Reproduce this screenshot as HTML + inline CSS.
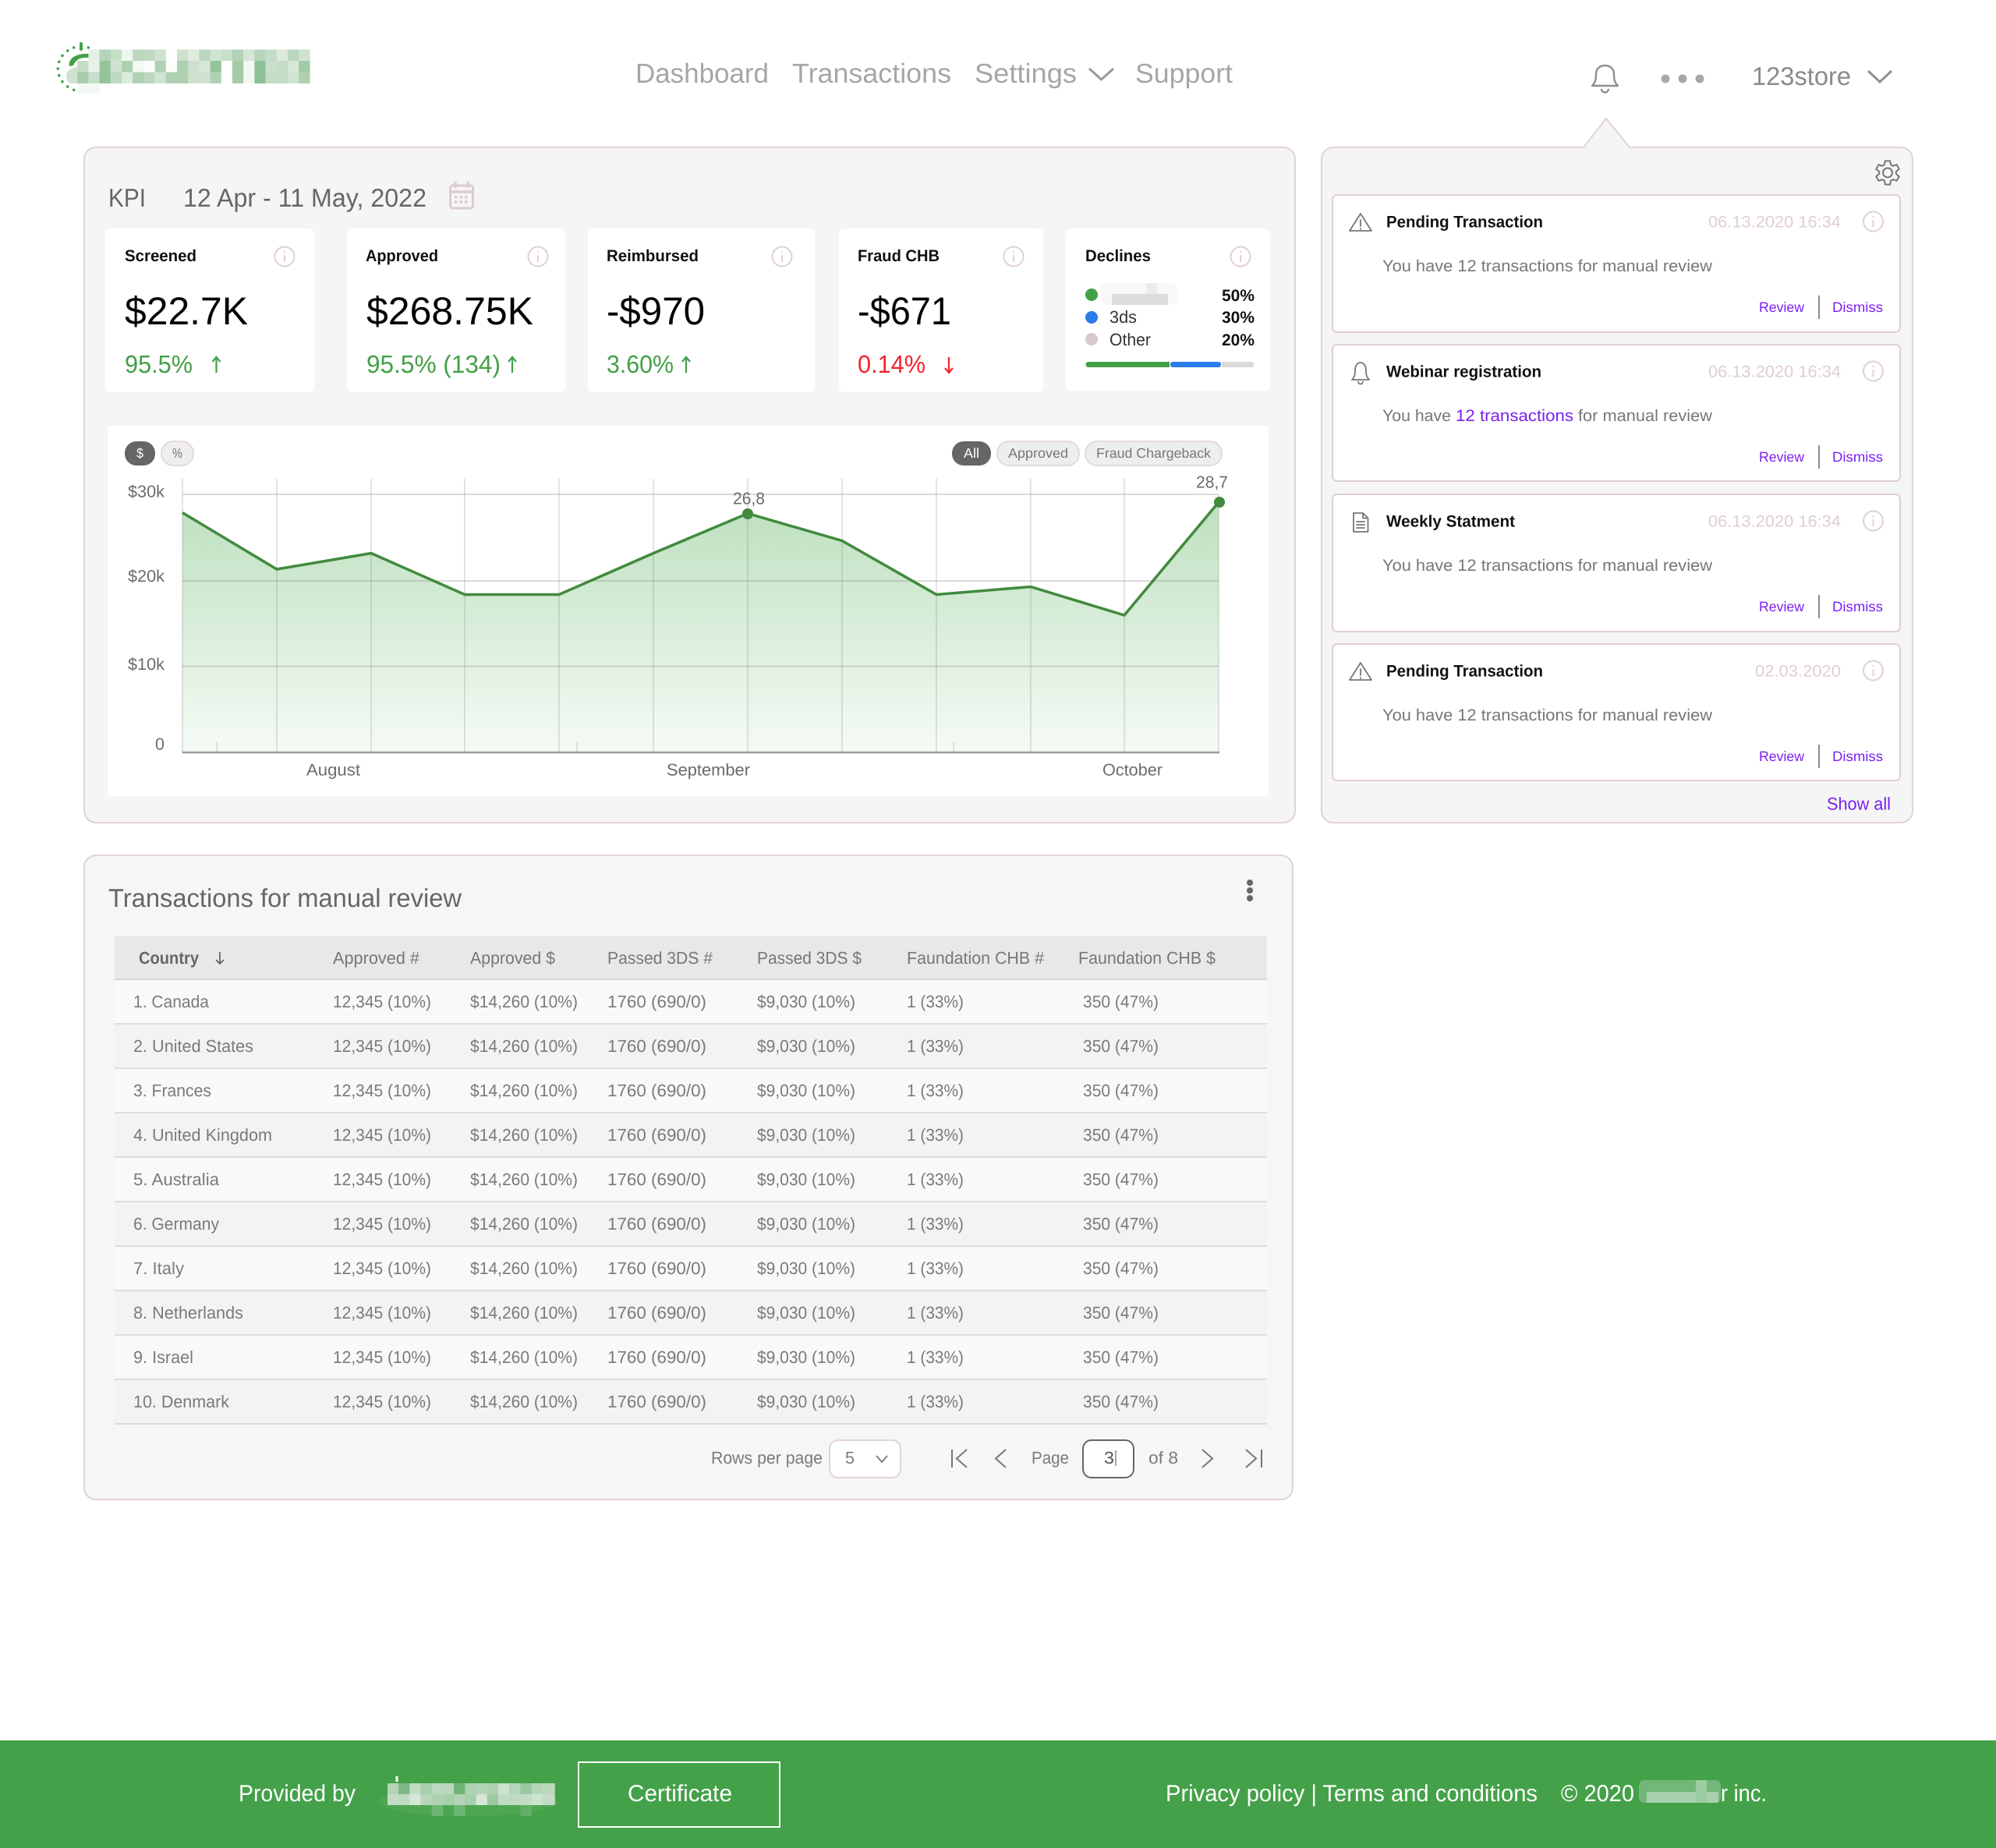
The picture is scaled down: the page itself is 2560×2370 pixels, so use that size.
<!DOCTYPE html>
<html lang="en"><head><meta charset="utf-8"><title>Dashboard</title>
<style>
html,body{margin:0;padding:0;background:#fff}
svg{display:block}
text{font-family:"Liberation Sans",sans-serif;text-rendering:geometricPrecision}
.nav{font-size:35px;fill:#a6a6a6}
.lb{font-size:21px;font-weight:700;fill:#111}
.val{font-size:50px;fill:#000}
.sub{font-size:32px;fill:#43a047}
.red{fill:#f5222d}
.h{font-size:33px;fill:#666}
.ax{font-size:21.5px;fill:#6b6b6b}
.pl{font-size:17.5px;fill:#777}
.d{font-size:21px;fill:#dfced1}
.b{font-size:21px;fill:#777}
.pu{fill:#7a1ff0}
.a{font-size:18px;fill:#7a1ff0}
.c{font-size:22px;fill:#7a7a7a}
.th{font-size:22px;fill:#777}
.f{font-size:30px;fill:#fff}
.ic{fill:none;stroke:#e0d0d3;stroke-width:2}
.g{fill:none;stroke:#777;stroke-width:1.8;stroke-linejoin:round;stroke-linecap:round}
</style></head>
<body>
<svg width="2560" height="2370" viewBox="0 0 2560 2370" xmlns="http://www.w3.org/2000/svg">
<defs>
<linearGradient id="ag" x1="0" y1="644" x2="0" y2="965" gradientUnits="userSpaceOnUse"><stop offset="0" stop-color="#bde0be"/><stop offset="1" stop-color="#f5fbf6"/></linearGradient>
<g id="inf"><circle cx="0" cy="0" r="12.5" class="ic"/><path d="M0 -2V7M0 -7V-5" class="ic" stroke-width="1.6"/></g>
</defs>
<rect width="2560" height="2370" fill="#fff"/>

<!-- logo -->
<g fill="#43a047">
<rect x="102" y="54" width="4" height="11" rx="2"/>
<circle cx="94.7" cy="61" r="1.8"/><circle cx="86.7" cy="65" r="1.8"/><circle cx="80" cy="71.3" r="1.8"/><circle cx="75.7" cy="79.3" r="1.8"/><circle cx="74.3" cy="88" r="1.8"/><circle cx="75.7" cy="96.7" r="1.8"/><circle cx="80" cy="104.7" r="1.8"/><circle cx="86.7" cy="111" r="1.8"/><circle cx="94.7" cy="115.3" r="1.8"/><circle cx="113.3" cy="61" r="1.8"/><circle cx="121.3" cy="65" r="1.8"/>
<path d="M89 85C87 75 97 68 116 69L114 74C104 73 97 76 94 84Z"/>
</g>
<g>
<rect x="99.2" y="78" width="14.4" height="14.5" fill="#c5dcc6"/><rect x="113.4" y="63.5" width="14.4" height="14.5" fill="#e4efe5"/><rect x="113.4" y="78" width="14.4" height="14.5" fill="#e8f2e8"/>
<path d="M99.2 86C91 87 85 91 85 97C85 102 87 107 91 107H99.6V86Z" fill="#cfe3d0"/>
<rect x="99.2" y="92.5" width="14.4" height="14.5" fill="#a8cdac"/><rect x="113.4" y="92.5" width="14.4" height="14.5" fill="#c9dfca"/>
<rect x="127.6" y="63.5" width="14.4" height="14.5" fill="#b5d3b8"/><rect x="141.8" y="63.5" width="14.4" height="14.5" fill="#c5dfc7"/><rect x="156" y="63.5" width="14.4" height="14.5" fill="#eff6ef"/><rect x="170.2" y="63.5" width="14.4" height="14.5" fill="#bcd8bf"/><rect x="184.4" y="63.5" width="14.4" height="14.5" fill="#c0dac2"/><rect x="198.6" y="63.5" width="14.4" height="14.5" fill="#cfe3d0"/><rect x="212.8" y="63.5" width="14.4" height="14.5" fill="#fcfefc"/><rect x="227" y="63.5" width="14.4" height="14.5" fill="#cde1ce"/><rect x="241.2" y="63.5" width="14.4" height="14.5" fill="#dfece0"/><rect x="255.4" y="63.5" width="14.4" height="14.5" fill="#bcd7bf"/><rect x="269.6" y="63.5" width="14.4" height="14.5" fill="#d0e4d1"/><rect x="283.8" y="63.5" width="14.4" height="14.5" fill="#c9dfcb"/><rect x="298" y="63.5" width="14.4" height="14.5" fill="#b3d2b6"/><rect x="312.2" y="63.5" width="14.4" height="14.5" fill="#d5e6d6"/><rect x="326.4" y="63.5" width="14.4" height="14.5" fill="#b7d5ba"/><rect x="340.6" y="63.5" width="14.4" height="14.5" fill="#c3dcc5"/><rect x="354.8" y="63.5" width="14.4" height="14.5" fill="#dcebdd"/><rect x="369" y="63.5" width="14.4" height="14.5" fill="#bad7bd"/><rect x="383.2" y="63.5" width="14.4" height="14.5" fill="#cfe3d0"/>
<rect x="127.6" y="78" width="14.4" height="14.5" fill="#94c49a"/><rect x="141.8" y="78" width="14.4" height="14.5" fill="#cfe3d0"/><rect x="156" y="78" width="14.4" height="14.5" fill="#aed0b1"/><rect x="170.2" y="78" width="14.4" height="14.5" fill="#f2f8f2"/><rect x="184.4" y="78" width="14.4" height="14.5" fill="#fbfdfb"/><rect x="198.6" y="78" width="14.4" height="14.5" fill="#b1d1b5"/><rect x="212.8" y="78" width="14.4" height="14.5" fill="#fafdfa"/><rect x="227" y="78" width="14.4" height="14.5" fill="#acd0b0"/><rect x="241.2" y="78" width="14.4" height="14.5" fill="#cde1ce"/><rect x="255.4" y="78" width="14.4" height="14.5" fill="#d6e7d7"/><rect x="269.6" y="78" width="14.4" height="14.5" fill="#95c49b"/><rect x="283.8" y="78" width="14.4" height="14.5" fill="#fff"/><rect x="298" y="78" width="14.4" height="14.5" fill="#a6cba9"/><rect x="312.2" y="78" width="14.4" height="14.5" fill="#f3f8f3"/><rect x="326.4" y="78" width="14.4" height="14.5" fill="#8fc096"/><rect x="340.6" y="78" width="14.4" height="14.5" fill="#c9dfcb"/><rect x="354.8" y="78" width="14.4" height="14.5" fill="#c4dcc6"/><rect x="369" y="78" width="14.4" height="14.5" fill="#d7e8d8"/><rect x="383.2" y="78" width="14.4" height="14.5" fill="#a3caa7"/>
<rect x="127.6" y="92.5" width="14.4" height="14.5" fill="#92c399"/><rect x="141.8" y="92.5" width="14.4" height="14.5" fill="#bfd9c1"/><rect x="156" y="92.5" width="14.4" height="14.5" fill="#dcebdc"/><rect x="170.2" y="92.5" width="14.4" height="14.5" fill="#afd1b2"/><rect x="184.4" y="92.5" width="14.4" height="14.5" fill="#bdd8bf"/><rect x="198.6" y="92.5" width="14.4" height="14.5" fill="#d0e4d1"/><rect x="212.8" y="92.5" width="14.4" height="14.5" fill="#aed0b1"/><rect x="227" y="92.5" width="14.4" height="14.5" fill="#aed0b1"/><rect x="241.2" y="92.5" width="14.4" height="14.5" fill="#cde1ce"/><rect x="255.4" y="92.5" width="14.4" height="14.5" fill="#cfe3d0"/><rect x="269.6" y="92.5" width="14.4" height="14.5" fill="#b0d1b3"/><rect x="283.8" y="92.5" width="14.4" height="14.5" fill="#fff"/><rect x="298" y="92.5" width="14.4" height="14.5" fill="#a6cba9"/><rect x="312.2" y="92.5" width="14.4" height="14.5" fill="#f3f8f3"/><rect x="326.4" y="92.5" width="14.4" height="14.5" fill="#8fc096"/><rect x="340.6" y="92.5" width="14.4" height="14.5" fill="#c3dcc5"/><rect x="354.8" y="92.5" width="14.4" height="14.5" fill="#c3dcc5"/><rect x="369" y="92.5" width="14.4" height="14.5" fill="#d0e4d1"/><rect x="383.2" y="92.5" width="14.4" height="14.5" fill="#afd1b2"/>
<rect x="99" y="107" width="29" height="13" fill="#f5f9f5"/>
</g>

<!-- nav -->
<text class="nav" x="815" y="106" textLength="171" lengthAdjust="spacingAndGlyphs">Dashboard</text>
<text class="nav" x="1016" y="106" textLength="204" lengthAdjust="spacingAndGlyphs">Transactions</text>
<text class="nav" x="1250" y="106" textLength="131" lengthAdjust="spacingAndGlyphs">Settings</text>
<path d="M1397 88L1412.500 102L1428 88" fill="none" stroke="#999" stroke-width="3"/>
<text class="nav" x="1456" y="106" textLength="125" lengthAdjust="spacingAndGlyphs">Support</text>
<path d="M2042 110C2046 106 2047 102 2047 95C2047 88 2052 84 2058.5 84C2065 84 2070 88 2070 95C2070 102 2071 106 2075 110Z M2054 114a4.5 4.5 0 0 0 9 0" fill="none" stroke="#8f8f8f" stroke-width="2.4" stroke-linejoin="round"/>
<g fill="#a8a8a8"><circle cx="2136" cy="101" r="5.500"/><circle cx="2158" cy="101" r="5.500"/><circle cx="2180" cy="101" r="5.500"/></g>
<text class="nav" x="2247" y="109" textLength="127" lengthAdjust="spacingAndGlyphs" style="font-size:33px;fill:#8a8a8a">123store</text>
<path d="M2396 91L2411 105L2426 91" fill="none" stroke="#8f8f8f" stroke-width="3"/>

<!-- panels -->
<rect x="108" y="189" width="1553" height="866" rx="15" fill="#f5f5f5" stroke="#e2d3d5" stroke-width="2"/>
<path d="M1710 189H2031L2060 152L2090 189H2438a15 15 0 0 1 15 15V1040a15 15 0 0 1-15 15H1710a15 15 0 0 1-15-15V204a15 15 0 0 1 15-15Z" fill="#f5f5f5" stroke="#e2d3d5" stroke-width="2"/>

<!-- KPI head -->
<text class="h" x="139" y="265" textLength="48" lengthAdjust="spacingAndGlyphs">KPI</text>
<text class="h" x="235" y="265" textLength="312" lengthAdjust="spacingAndGlyphs">12 Apr - 11 May, 2022</text>
<g fill="none" stroke="#dccccf" stroke-width="3"><rect x="577.5" y="238" width="29" height="29" rx="3"/><path d="M584 233V241M600 233V241M578 246H606" stroke-width="3.500"/><path d="M583 253H601M583 259H601" stroke-width="3.500" stroke-dasharray="3.500 3"/></g>

<!-- KPI cards -->
<g fill="#fff">
<rect x="135" y="293" width="268" height="210" rx="7"/><rect x="445" y="293" width="280" height="210" rx="7"/><rect x="754" y="293" width="291" height="210" rx="7"/><rect x="1076" y="293" width="262" height="210" rx="7"/><rect x="1367" y="293" width="262" height="208" rx="7"/>
</g>
<text class="lb" x="160" y="335" textLength="92" lengthAdjust="spacingAndGlyphs">Screened</text>
<text class="lb" x="469" y="335" textLength="93" lengthAdjust="spacingAndGlyphs">Approved</text>
<text class="lb" x="778" y="335" textLength="118" lengthAdjust="spacingAndGlyphs">Reimbursed</text>
<text class="lb" x="1100" y="335" textLength="105" lengthAdjust="spacingAndGlyphs">Fraud CHB</text>
<text class="lb" x="1392" y="335" textLength="84" lengthAdjust="spacingAndGlyphs">Declines</text>
<use href="#inf" x="365" y="329"/><use href="#inf" x="690" y="329"/><use href="#inf" x="1003" y="329"/><use href="#inf" x="1300" y="329"/><use href="#inf" x="1591" y="329"/>
<text class="val" x="160" y="416" textLength="158" lengthAdjust="spacingAndGlyphs">$22.7K</text>
<text class="val" x="470" y="416" textLength="214" lengthAdjust="spacingAndGlyphs">$268.75K</text>
<text class="val" x="778" y="416" textLength="126" lengthAdjust="spacingAndGlyphs">-$970</text>
<text class="val" x="1100" y="416" textLength="120" lengthAdjust="spacingAndGlyphs">-$671</text>
<text class="sub" x="160" y="478" textLength="87" lengthAdjust="spacingAndGlyphs">95.5%</text>
<text class="sub" x="470" y="478" textLength="172" lengthAdjust="spacingAndGlyphs">95.5% (134)</text>
<text class="sub" x="778" y="478" textLength="86" lengthAdjust="spacingAndGlyphs">3.60%</text>
<text class="sub red" x="1100" y="478" textLength="87" lengthAdjust="spacingAndGlyphs">0.14%</text>
<g fill="none" stroke="#43a047" stroke-width="2.2"><path d="M277.5 478V458M272.5 464L277.5 458L282.5 464"/><path d="M657 478V458M652 464L657 458L662 464"/><path d="M880 478V458M875 464L880 458L885 464"/></g>
<path d="M1217 458V478M1212 472L1217 478L1222 472" fill="none" stroke="#f5222d" stroke-width="2.2"/>
<circle cx="1400" cy="378" r="8" fill="#43a047"/><circle cx="1400" cy="407" r="8" fill="#2b7de9"/><circle cx="1400" cy="435" r="8" fill="#d9c8cb"/>
<g>
<rect x="1412" y="363" width="98" height="28" rx="8" fill="#f8f8f8"/><rect x="1426" y="377" width="72" height="14" fill="#dcdcdc"/><rect x="1470" y="363" width="14" height="14" fill="#ececec"/>
</g>
<text class="c" x="1423" y="414" textLength="35" lengthAdjust="spacingAndGlyphs" style="fill:#333">3ds</text>
<text class="c" x="1423" y="443" textLength="53" lengthAdjust="spacingAndGlyphs" style="fill:#333">Other</text>
<g class="lb"><text x="1567" y="386" textLength="42" lengthAdjust="spacingAndGlyphs">50%</text><text x="1567" y="414" textLength="42" lengthAdjust="spacingAndGlyphs">30%</text><text x="1567" y="443" textLength="42" lengthAdjust="spacingAndGlyphs">20%</text></g>
<path d="M1396 464H1500V471H1396a3.500 3.500 0 0 1 0-7Z" fill="#43a047"/><rect x="1501" y="464" width="65" height="7" rx="3" fill="#2b7de9"/><path d="M1567 464H1605a3.500 3.500 0 0 1 0 7H1567Z" fill="#d9d9d9"/>

<!-- chart -->
<rect x="138" y="546" width="1489" height="475" fill="#fff"/>
<path d="M234 657.500L355 730L476 709.500L596 762.500L717 762.500L838 709.500L959 658.500L1080 693.500L1201 762.500L1322 752.500L1442 789L1563 644V965H234Z" fill="url(#ag)"/>
<g stroke="#5f5f5f" stroke-opacity=".22" stroke-width="1.500"><path d="M234 614V965M355 614V965M476 614V965M596 614V965M717 614V965M838 614V965M959 614V965M1080 614V965M1201 614V965M1322 614V965M1442 614V965M1563 634V965M278 951V965M740 951V965M1223 951V965"/></g>
<g stroke="#7a6a6c" stroke-opacity=".25" stroke-width="2"><path d="M234 634H1563M234 745H1563M234 854.500H1563"/></g>
<path d="M234 965H1564" stroke="#9a9a9a" stroke-width="2.500"/>
<path d="M234 657.500L355 730L476 709.500L596 762.500L717 762.500L838 709.500L959 658.500L1080 693.500L1201 762.500L1322 752.500L1442 789L1563 644" fill="none" stroke="#418a3e" stroke-width="3.500"/>
<circle cx="959" cy="659" r="7" fill="#418a3e"/><circle cx="1564" cy="644" r="7" fill="#418a3e"/>
<text class="ax" x="940" y="646.500" textLength="41" lengthAdjust="spacingAndGlyphs">26,8</text>
<text class="ax" x="1534" y="625.500" textLength="41" lengthAdjust="spacingAndGlyphs">28,7</text>
<text class="ax" x="164" y="637.500" textLength="47" lengthAdjust="spacingAndGlyphs">$30k</text>
<text class="ax" x="164" y="746" textLength="47" lengthAdjust="spacingAndGlyphs">$20k</text>
<text class="ax" x="164" y="859" textLength="47" lengthAdjust="spacingAndGlyphs">$10k</text>
<text class="ax" x="199" y="961.500" textLength="12" lengthAdjust="spacingAndGlyphs">0</text>
<text class="ax" x="393" y="994.500" textLength="69" lengthAdjust="spacingAndGlyphs">August</text>
<text class="ax" x="855" y="994.500" textLength="107" lengthAdjust="spacingAndGlyphs">September</text>
<text class="ax" x="1414" y="994.500" textLength="77" lengthAdjust="spacingAndGlyphs">October</text>
<rect x="160" y="566" width="39" height="31" rx="15" fill="#666"/>
<text class="pl" x="175" y="587" textLength="9" lengthAdjust="spacingAndGlyphs" style="fill:#fff">$</text>
<rect x="207" y="566" width="41" height="31" rx="15" fill="#eee" stroke="#e0d0d2" stroke-width="1.500"/>
<text class="pl" x="221" y="587" textLength="13" lengthAdjust="spacingAndGlyphs">%</text>
<rect x="1221" y="566" width="50" height="31" rx="15" fill="#666"/>
<text class="pl" x="1236" y="587" textLength="20" lengthAdjust="spacingAndGlyphs" style="fill:#fff">All</text>
<rect x="1279" y="566" width="105" height="31" rx="15" fill="#eee" stroke="#e0d0d2" stroke-width="1.500"/>
<text class="pl" x="1293" y="587" textLength="77" lengthAdjust="spacingAndGlyphs">Approved</text>
<rect x="1392" y="566" width="175" height="31" rx="15" fill="#eee" stroke="#e0d0d2" stroke-width="1.500"/>
<text class="pl" x="1406" y="587" textLength="147" lengthAdjust="spacingAndGlyphs">Fraud Chargeback</text>

<!-- notifications -->
<g transform="translate(2421 221.500)" fill="none" stroke="#777" stroke-width="2" stroke-linejoin="round">
<path d="M-4.120 -10.200L-3.220 -15.160L3.220 -15.160L4.120 -10.200L6.770 -8.670L11.520 -10.370L14.740 -4.790L10.890 -1.530L10.890 1.530L14.740 4.790L11.520 10.370L6.770 8.670L4.120 10.200L3.220 15.160L-3.220 15.160L-4.120 10.200L-6.770 8.670L-11.520 10.370L-14.740 4.790L-10.890 1.530L-10.890 -1.530L-14.740 -4.790L-11.520 -10.370L-6.770 -8.670Z"/>
<circle cx="0" cy="0" r="6"/>
</g>

<g fill="#fff" stroke="#e0cfd2" stroke-width="2">
<rect x="1709" y="250" width="728" height="176" rx="6"/><rect x="1709" y="442" width="728" height="175" rx="6"/><rect x="1709" y="634" width="728" height="176" rx="6"/><rect x="1709" y="826" width="728" height="175" rx="6"/>
</g>

<path d="M1745 274L1759 296H1731Z M1745 282V290 M1745 293V294" class="g"/>
<text class="lb" x="1778" y="291.500" textLength="201" lengthAdjust="spacingAndGlyphs">Pending Transaction</text>
<text class="d" x="2191" y="291.500" textLength="170" lengthAdjust="spacingAndGlyphs">06.13.2020 16:34</text>
<use href="#inf" x="2402.500" y="284"/>
<text class="b" x="1773" y="348" textLength="423" lengthAdjust="spacingAndGlyphs">You have 12 transactions for manual review</text>
<text class="a" x="2256" y="400" textLength="58" lengthAdjust="spacingAndGlyphs">Review</text>
<path d="M2333 379V409" stroke="#666" stroke-width="1.500"/>
<text class="a" x="2350" y="400" textLength="65" lengthAdjust="spacingAndGlyphs">Dismiss</text>

<path d="M1734 487C1737 484 1738 481 1738 475C1738 469 1741 465 1745 465C1749 465 1752 469 1752 475C1752 481 1753 484 1756 487Z M1742 489.500a3 3 0 0 0 6 0" class="g"/>
<text class="lb" x="1778" y="483.500" textLength="199" lengthAdjust="spacingAndGlyphs">Webinar registration</text>
<text class="d" x="2191" y="483.500" textLength="170" lengthAdjust="spacingAndGlyphs">06.13.2020 16:34</text>
<use href="#inf" x="2402.500" y="476"/>
<text class="b" x="1773" y="540" textLength="88" lengthAdjust="spacingAndGlyphs">You have</text>
<text class="b pu" x="1867" y="540" textLength="151" lengthAdjust="spacingAndGlyphs">12 transactions</text>
<text class="b" x="2024" y="540" textLength="172" lengthAdjust="spacingAndGlyphs">for manual review</text>
<text class="a" x="2256" y="592" textLength="58" lengthAdjust="spacingAndGlyphs">Review</text>
<path d="M2333 571V601" stroke="#666" stroke-width="1.500"/>
<text class="a" x="2350" y="592" textLength="65" lengthAdjust="spacingAndGlyphs">Dismiss</text>

<path d="M1736 658H1748L1754.500 664.500V682H1736Z M1748 658V664.500H1754.500 M1740 669H1750 M1740 673H1750 M1740 677H1750" class="g"/>
<text class="lb" x="1778" y="675.500" textLength="165" lengthAdjust="spacingAndGlyphs">Weekly Statment</text>
<text class="d" x="2191" y="675.500" textLength="170" lengthAdjust="spacingAndGlyphs">06.13.2020 16:34</text>
<use href="#inf" x="2402.500" y="668"/>
<text class="b" x="1773" y="732" textLength="423" lengthAdjust="spacingAndGlyphs">You have 12 transactions for manual review</text>
<text class="a" x="2256" y="784" textLength="58" lengthAdjust="spacingAndGlyphs">Review</text>
<path d="M2333 763V793" stroke="#666" stroke-width="1.500"/>
<text class="a" x="2350" y="784" textLength="65" lengthAdjust="spacingAndGlyphs">Dismiss</text>

<path d="M1745 850L1759 872H1731Z M1745 858V866 M1745 869V870" class="g"/>
<text class="lb" x="1778" y="867.500" textLength="201" lengthAdjust="spacingAndGlyphs">Pending Transaction</text>
<text class="d" x="2251" y="867.500" textLength="110" lengthAdjust="spacingAndGlyphs">02.03.2020</text>
<use href="#inf" x="2402.500" y="860"/>
<text class="b" x="1773" y="924" textLength="423" lengthAdjust="spacingAndGlyphs">You have 12 transactions for manual review</text>
<text class="a" x="2256" y="976" textLength="58" lengthAdjust="spacingAndGlyphs">Review</text>
<path d="M2333 955V985" stroke="#666" stroke-width="1.500"/>
<text class="a" x="2350" y="976" textLength="65" lengthAdjust="spacingAndGlyphs">Dismiss</text>
<text class="a" x="2343" y="1038.500" textLength="82" lengthAdjust="spacingAndGlyphs" style="font-size:22.500px">Show all</text>

<!-- table panel -->
<rect x="108" y="1097" width="1550" height="826" rx="15" fill="#f6f6f6" stroke="#e2d3d5" stroke-width="2"/>
<text class="h" x="139" y="1163" textLength="453" lengthAdjust="spacingAndGlyphs">Transactions for manual review</text>
<g fill="#666"><circle cx="1603" cy="1132" r="4"/><circle cx="1603" cy="1142" r="4"/><circle cx="1603" cy="1152" r="4"/></g>
<rect x="147" y="1200" width="1478" height="55" fill="#e8e8e8"/>
<rect x="147" y="1255" width="1478" height="2" fill="#d6d6d6"/>
<g fill="#f9f9f9"><rect x="147" y="1257" width="1478" height="55"/><rect x="147" y="1371" width="1478" height="55"/><rect x="147" y="1485" width="1478" height="55"/><rect x="147" y="1599" width="1478" height="55"/><rect x="147" y="1713" width="1478" height="55"/></g>
<g fill="#f3f3f3"><rect x="147" y="1314" width="1478" height="55"/><rect x="147" y="1428" width="1478" height="55"/><rect x="147" y="1542" width="1478" height="55"/><rect x="147" y="1656" width="1478" height="55"/><rect x="147" y="1770" width="1478" height="55"/></g>
<g fill="#dcdcdc"><rect x="147" y="1312" width="1478" height="2"/><rect x="147" y="1369" width="1478" height="2"/><rect x="147" y="1426" width="1478" height="2"/><rect x="147" y="1483" width="1478" height="2"/><rect x="147" y="1540" width="1478" height="2"/><rect x="147" y="1597" width="1478" height="2"/><rect x="147" y="1654" width="1478" height="2"/><rect x="147" y="1711" width="1478" height="2"/><rect x="147" y="1768" width="1478" height="2"/><rect x="147" y="1825" width="1478" height="2"/></g>

<text class="th" x="178" y="1236" textLength="77" lengthAdjust="spacingAndGlyphs" style="font-weight:700;fill:#666">Country</text>
<path d="M282 1221V1236M277 1231L282 1236L287 1231" fill="none" stroke="#666" stroke-width="1.800"/>
<text class="th" x="427" y="1236" textLength="111" lengthAdjust="spacingAndGlyphs">Approved #</text>
<text class="th" x="603" y="1236" textLength="109" lengthAdjust="spacingAndGlyphs">Approved $</text>
<text class="th" x="779" y="1236" textLength="135" lengthAdjust="spacingAndGlyphs">Passed 3DS #</text>
<text class="th" x="971" y="1236" textLength="134" lengthAdjust="spacingAndGlyphs">Passed 3DS $</text>
<text class="th" x="1163" y="1236" textLength="176" lengthAdjust="spacingAndGlyphs">Faundation CHB #</text>
<text class="th" x="1383" y="1236" textLength="176" lengthAdjust="spacingAndGlyphs">Faundation CHB $</text>

<g class="c">
<text x="171" y="1292" textLength="97" lengthAdjust="spacingAndGlyphs">1. Canada</text><text x="427" y="1292" textLength="126" lengthAdjust="spacingAndGlyphs">12,345 (10%)</text><text x="603" y="1292" textLength="138" lengthAdjust="spacingAndGlyphs">$14,260 (10%)</text><text x="779" y="1292" textLength="127" lengthAdjust="spacingAndGlyphs">1760 (690/0)</text><text x="971" y="1292" textLength="126" lengthAdjust="spacingAndGlyphs">$9,030 (10%)</text><text x="1163" y="1292" textLength="73" lengthAdjust="spacingAndGlyphs">1 (33%)</text><text x="1389" y="1292" textLength="97" lengthAdjust="spacingAndGlyphs">350 (47%)</text>
<text x="171" y="1349" textLength="154" lengthAdjust="spacingAndGlyphs">2. United States</text><text x="427" y="1349" textLength="126" lengthAdjust="spacingAndGlyphs">12,345 (10%)</text><text x="603" y="1349" textLength="138" lengthAdjust="spacingAndGlyphs">$14,260 (10%)</text><text x="779" y="1349" textLength="127" lengthAdjust="spacingAndGlyphs">1760 (690/0)</text><text x="971" y="1349" textLength="126" lengthAdjust="spacingAndGlyphs">$9,030 (10%)</text><text x="1163" y="1349" textLength="73" lengthAdjust="spacingAndGlyphs">1 (33%)</text><text x="1389" y="1349" textLength="97" lengthAdjust="spacingAndGlyphs">350 (47%)</text>
<text x="171" y="1406" textLength="100" lengthAdjust="spacingAndGlyphs">3. Frances</text><text x="427" y="1406" textLength="126" lengthAdjust="spacingAndGlyphs">12,345 (10%)</text><text x="603" y="1406" textLength="138" lengthAdjust="spacingAndGlyphs">$14,260 (10%)</text><text x="779" y="1406" textLength="127" lengthAdjust="spacingAndGlyphs">1760 (690/0)</text><text x="971" y="1406" textLength="126" lengthAdjust="spacingAndGlyphs">$9,030 (10%)</text><text x="1163" y="1406" textLength="73" lengthAdjust="spacingAndGlyphs">1 (33%)</text><text x="1389" y="1406" textLength="97" lengthAdjust="spacingAndGlyphs">350 (47%)</text>
<text x="171" y="1463" textLength="178" lengthAdjust="spacingAndGlyphs">4. United Kingdom</text><text x="427" y="1463" textLength="126" lengthAdjust="spacingAndGlyphs">12,345 (10%)</text><text x="603" y="1463" textLength="138" lengthAdjust="spacingAndGlyphs">$14,260 (10%)</text><text x="779" y="1463" textLength="127" lengthAdjust="spacingAndGlyphs">1760 (690/0)</text><text x="971" y="1463" textLength="126" lengthAdjust="spacingAndGlyphs">$9,030 (10%)</text><text x="1163" y="1463" textLength="73" lengthAdjust="spacingAndGlyphs">1 (33%)</text><text x="1389" y="1463" textLength="97" lengthAdjust="spacingAndGlyphs">350 (47%)</text>
<text x="171" y="1520" textLength="110" lengthAdjust="spacingAndGlyphs">5. Australia</text><text x="427" y="1520" textLength="126" lengthAdjust="spacingAndGlyphs">12,345 (10%)</text><text x="603" y="1520" textLength="138" lengthAdjust="spacingAndGlyphs">$14,260 (10%)</text><text x="779" y="1520" textLength="127" lengthAdjust="spacingAndGlyphs">1760 (690/0)</text><text x="971" y="1520" textLength="126" lengthAdjust="spacingAndGlyphs">$9,030 (10%)</text><text x="1163" y="1520" textLength="73" lengthAdjust="spacingAndGlyphs">1 (33%)</text><text x="1389" y="1520" textLength="97" lengthAdjust="spacingAndGlyphs">350 (47%)</text>
<text x="171" y="1577" textLength="110" lengthAdjust="spacingAndGlyphs">6. Germany</text><text x="427" y="1577" textLength="126" lengthAdjust="spacingAndGlyphs">12,345 (10%)</text><text x="603" y="1577" textLength="138" lengthAdjust="spacingAndGlyphs">$14,260 (10%)</text><text x="779" y="1577" textLength="127" lengthAdjust="spacingAndGlyphs">1760 (690/0)</text><text x="971" y="1577" textLength="126" lengthAdjust="spacingAndGlyphs">$9,030 (10%)</text><text x="1163" y="1577" textLength="73" lengthAdjust="spacingAndGlyphs">1 (33%)</text><text x="1389" y="1577" textLength="97" lengthAdjust="spacingAndGlyphs">350 (47%)</text>
<text x="171" y="1634" textLength="65" lengthAdjust="spacingAndGlyphs">7. Italy</text><text x="427" y="1634" textLength="126" lengthAdjust="spacingAndGlyphs">12,345 (10%)</text><text x="603" y="1634" textLength="138" lengthAdjust="spacingAndGlyphs">$14,260 (10%)</text><text x="779" y="1634" textLength="127" lengthAdjust="spacingAndGlyphs">1760 (690/0)</text><text x="971" y="1634" textLength="126" lengthAdjust="spacingAndGlyphs">$9,030 (10%)</text><text x="1163" y="1634" textLength="73" lengthAdjust="spacingAndGlyphs">1 (33%)</text><text x="1389" y="1634" textLength="97" lengthAdjust="spacingAndGlyphs">350 (47%)</text>
<text x="171" y="1691" textLength="141" lengthAdjust="spacingAndGlyphs">8. Netherlands</text><text x="427" y="1691" textLength="126" lengthAdjust="spacingAndGlyphs">12,345 (10%)</text><text x="603" y="1691" textLength="138" lengthAdjust="spacingAndGlyphs">$14,260 (10%)</text><text x="779" y="1691" textLength="127" lengthAdjust="spacingAndGlyphs">1760 (690/0)</text><text x="971" y="1691" textLength="126" lengthAdjust="spacingAndGlyphs">$9,030 (10%)</text><text x="1163" y="1691" textLength="73" lengthAdjust="spacingAndGlyphs">1 (33%)</text><text x="1389" y="1691" textLength="97" lengthAdjust="spacingAndGlyphs">350 (47%)</text>
<text x="171" y="1748" textLength="77" lengthAdjust="spacingAndGlyphs">9. Israel</text><text x="427" y="1748" textLength="126" lengthAdjust="spacingAndGlyphs">12,345 (10%)</text><text x="603" y="1748" textLength="138" lengthAdjust="spacingAndGlyphs">$14,260 (10%)</text><text x="779" y="1748" textLength="127" lengthAdjust="spacingAndGlyphs">1760 (690/0)</text><text x="971" y="1748" textLength="126" lengthAdjust="spacingAndGlyphs">$9,030 (10%)</text><text x="1163" y="1748" textLength="73" lengthAdjust="spacingAndGlyphs">1 (33%)</text><text x="1389" y="1748" textLength="97" lengthAdjust="spacingAndGlyphs">350 (47%)</text>
<text x="171" y="1805" textLength="123" lengthAdjust="spacingAndGlyphs">10. Denmark</text><text x="427" y="1805" textLength="126" lengthAdjust="spacingAndGlyphs">12,345 (10%)</text><text x="603" y="1805" textLength="138" lengthAdjust="spacingAndGlyphs">$14,260 (10%)</text><text x="779" y="1805" textLength="127" lengthAdjust="spacingAndGlyphs">1760 (690/0)</text><text x="971" y="1805" textLength="126" lengthAdjust="spacingAndGlyphs">$9,030 (10%)</text><text x="1163" y="1805" textLength="73" lengthAdjust="spacingAndGlyphs">1 (33%)</text><text x="1389" y="1805" textLength="97" lengthAdjust="spacingAndGlyphs">350 (47%)</text>
</g>

<!-- pagination -->
<text class="c" x="912" y="1877" textLength="143" lengthAdjust="spacingAndGlyphs">Rows per page</text>
<rect x="1064" y="1847" width="91" height="48" rx="11" fill="#fff" stroke="#e2d3d5" stroke-width="2"/>
<text class="c" x="1084" y="1877" textLength="12" lengthAdjust="spacingAndGlyphs">5</text>
<path d="M1124 1867L1131 1875L1138 1867" fill="none" stroke="#777" stroke-width="1.800"/>
<path d="M1221 1859V1882M1240 1859L1227 1870.500L1240 1882M1290 1859L1277 1870.500L1290 1882M1542 1859L1555 1870.500L1542 1882M1598 1859L1611 1870.500L1598 1882M1618 1859V1882" fill="none" stroke="#777" stroke-width="2"/>
<text class="c" x="1323" y="1877" textLength="48" lengthAdjust="spacingAndGlyphs">Page</text>
<rect x="1389" y="1847" width="65" height="48" rx="11" fill="#fff" stroke="#666" stroke-width="2"/>
<text class="c" x="1416" y="1877" textLength="13" lengthAdjust="spacingAndGlyphs" style="fill:#555">3</text>
<path d="M1431 1860V1880" stroke="#888" stroke-width="1.500"/>
<text class="c" x="1473" y="1877" textLength="38" lengthAdjust="spacingAndGlyphs">of 8</text>

<!-- footer -->
<rect x="0" y="2232" width="2560" height="138" fill="#44a149"/>
<text class="f" x="306" y="2310" textLength="150" lengthAdjust="spacingAndGlyphs">Provided by</text>
<ellipse cx="600" cy="2311" rx="115" ry="18" fill="#4da752"/>
<rect x="507.500" y="2278" width="3" height="7" fill="#fff"/>
<g>
<rect x="497" y="2287" width="14.400" height="14" fill="#b2d3b5"/><rect x="511.200" y="2287" width="14.400" height="14" fill="#7db985"/><rect x="525.400" y="2287" width="14.400" height="14" fill="#c0dcc3"/><rect x="539.600" y="2287" width="14.400" height="14" fill="#a6cfab"/><rect x="553.800" y="2287" width="14.400" height="14" fill="#bcd9bf"/><rect x="568" y="2287" width="14.400" height="14" fill="#b9d8bc"/><rect x="582.200" y="2287" width="14.400" height="14" fill="#6fb276"/><rect x="596.400" y="2287" width="14.400" height="14" fill="#aed2b1"/><rect x="610.600" y="2287" width="14.400" height="14" fill="#b5d5b8"/><rect x="624.800" y="2287" width="14.400" height="14" fill="#aed2b1"/><rect x="639" y="2287" width="14.400" height="14" fill="#cce3cd"/><rect x="653.200" y="2287" width="14.400" height="14" fill="#b5d5b8"/><rect x="667.400" y="2287" width="14.400" height="14" fill="#98c89d"/><rect x="681.600" y="2287" width="14.400" height="14" fill="#b5d5b8"/><rect x="695.800" y="2287" width="16" height="14" fill="#b9d8bc"/>
<rect x="497" y="2301" width="14.400" height="14" fill="#c4dcc6"/><rect x="511.200" y="2301" width="14.400" height="14" fill="#bfdac1"/><rect x="525.400" y="2301" width="14.400" height="14" fill="#d6e6d7"/><rect x="539.600" y="2301" width="14.400" height="14" fill="#b6d6b9"/><rect x="553.800" y="2301" width="14.400" height="14" fill="#aed2b1"/><rect x="568" y="2301" width="14.400" height="14" fill="#a6cfab"/><rect x="582.200" y="2301" width="14.400" height="14" fill="#b2d3b5"/><rect x="596.400" y="2301" width="14.400" height="14" fill="#a6cfab"/><rect x="610.600" y="2301" width="14.400" height="14" fill="#d6e6d7"/><rect x="624.800" y="2301" width="14.400" height="14" fill="#9cc9a0"/><rect x="639" y="2301" width="14.400" height="14" fill="#c0dcc3"/><rect x="653.200" y="2301" width="14.400" height="14" fill="#bfdac1"/><rect x="667.400" y="2301" width="14.400" height="14" fill="#c4dcc6"/><rect x="681.600" y="2301" width="14.400" height="14" fill="#cce3cd"/><rect x="695.800" y="2301" width="16" height="14" fill="#c4dcc6"/>
<rect x="553.800" y="2315" width="14.400" height="14" fill="#6db673"/><rect x="582.200" y="2315" width="14.400" height="14" fill="#6db673"/><rect x="667.400" y="2315" width="14.400" height="14" fill="#62af69"/>
</g>
<rect x="742" y="2260" width="258" height="83" fill="none" stroke="#fff" stroke-width="2"/>
<text class="f" x="805" y="2310" textLength="134" lengthAdjust="spacingAndGlyphs">Certificate</text>
<text class="f" x="1495" y="2310" textLength="477" lengthAdjust="spacingAndGlyphs">Privacy policy | Terms and conditions</text>
<text class="f" x="2002" y="2310" textLength="94" lengthAdjust="spacingAndGlyphs">© 2020</text>
<rect x="2102" y="2283" width="105" height="29" rx="7" fill="#72b778"/>
<rect x="2112" y="2298" width="92" height="14" fill="#a9d1ad"/>
<rect x="2175" y="2283" width="14" height="29" fill="#9ccca1"/>
<text class="f" x="2207" y="2310" textLength="59" lengthAdjust="spacingAndGlyphs">r inc.</text>
</svg>
</body></html>
